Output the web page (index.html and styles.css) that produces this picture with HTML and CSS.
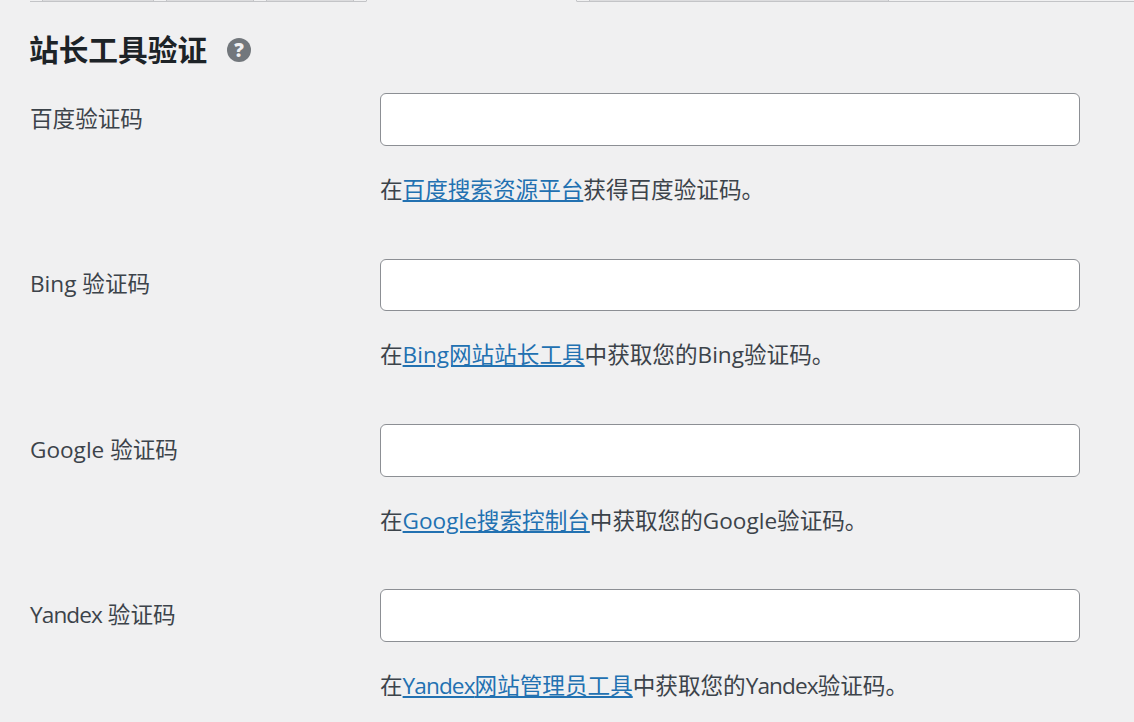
FILE: index.html
```html
<!DOCTYPE html>
<html lang="zh-CN">
<head>
  <meta charset="UTF-8">
  <title>站长工具验证</title>
  <link rel="stylesheet" href="styles.css">
</head>
<body>
  <nav class="tabs">
    <a class="tab" style="width:112px"></a>
    <a class="tab" style="width:88px"></a>
    <a class="tab" style="width:88px"></a>
    <a class="tab active" style="width:211px"></a>
    <a class="tab" style="width:300px"></a>
  </nav>

  <h2 class="title">站长工具验证 <span class="help">?</span></h2>

  <div class="row">
    <label class="label">百度验证码</label>
    <div class="field">
      <input class="text" type="text">
      <p class="desc">在<a href="#">百度搜索资源平台</a>获得百度验证码。</p>
    </div>
  </div>
  <div class="row">
    <label class="label">Bing 验证码</label>
    <div class="field">
      <input class="text" type="text">
      <p class="desc">在<a href="#">Bing网站站长工具</a>中获取您的Bing验证码。</p>
    </div>
  </div>
  <div class="row">
    <label class="label">Google 验证码</label>
    <div class="field">
      <input class="text" type="text">
      <p class="desc">在<a href="#">Google搜索控制台</a>中获取您的Google验证码。</p>
    </div>
  </div>
  <div class="row">
    <label class="label"><span class="yandex">Yandex</span> 验证码</label>
    <div class="field">
      <input class="text" type="text">
      <p class="desc">在<a href="#"><span class="yandex">Yandex</span>网站管理员工具</a>中获取您的<span class="yandex">Yandex</span>验证码。</p>
    </div>
  </div>
</body>
</html>
```

FILE: styles.css
```css
html, body{
  margin: 0; padding: 0; height: 722px; overflow: hidden;
}
body{
  padding-left: 30px; background-color: #F0F0F1; color: #3C434A;
  font-family: "Open Sans", "Noto Sans CJK SC", sans-serif; font-size: 22.6px;
}
.tabs{
  display: flex; gap: 12px; height: 1px; padding-left: 12px;
  border-bottom: 1px solid #C3C4C7;
}
.tab{
  display: block; box-sizing: border-box; height: 2px;
  border: 1px solid #C3C4C7; border-top: 0;
  background-color: #DCDCDE;
}
.tab.active{
  background-color: #F0F0F1; border-bottom-color: #F0F0F1;
}
.title{
  display: flex; align-items: center; gap: 20px; height: 36px; margin: 28px 0 0 -1px;
  color: #1D2327; font-size: 29.7px; font-weight: 700;
}
.help{
  display: flex; justify-content: center; align-items: center;
  width: 24px; height: 24px; margin-top: 4px; border-radius: 50%;
  background-color: #72777C; color: #F0F0F1;
  font-family: "Open Sans", sans-serif; font-size: 19px; font-weight: 800;
}
.row{
  display: grid; grid-template-columns: 350px 700px; height: 165.2px;
}
.row:nth-of-type(1){
  margin-top: 27.4px;
}
.label{
  margin-top: 8.8px; line-height: 33px;
}
.text{
  display: block; box-sizing: border-box; width: 700px; height: 52.75px; margin: 0;
  background-color: #FFFFFF; border: 1px solid #8C8F94; border-radius: 6px;
}
.desc{
  margin: 27.05px 0 0; line-height: 33px;
}
.desc a{
  color: #2271B1; text-decoration: underline;
}
.yandex{
  letter-spacing: -0.9px;
}
```
